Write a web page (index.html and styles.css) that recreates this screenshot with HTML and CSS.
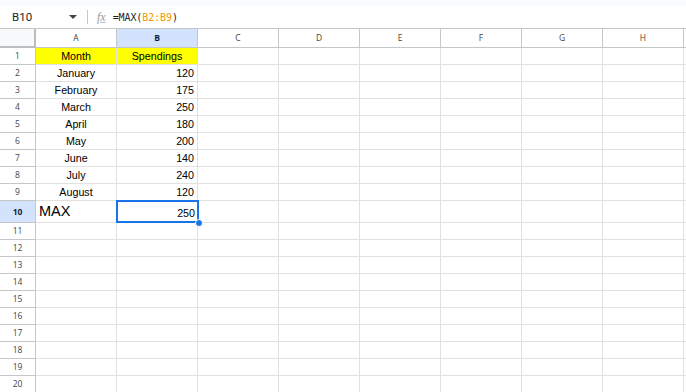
FILE: index.html
```html
<!DOCTYPE html>
<html lang="en">
<head>
    <meta charset="UTF-8">
    <title>Sheet</title>
    <link rel="stylesheet" href="styles.css">
</head>
<body>
    <div class="top-strip"></div>

    <div class="formula-bar">
        <div class="name-box">B10</div>
        <div class="name-arrow"></div>
        <div class="bar-sep"></div>
        <div class="fx-icon">fx</div>
        <div class="formula">=MAX(<span class="ref">B2:B9</span>)</div>
    </div>

    <div class="sheet">
        <div class="cell corner"></div>
        <div class="cell col-head">A</div>
        <div class="cell col-head active">B</div>
        <div class="cell col-head">C</div>
        <div class="cell col-head">D</div>
        <div class="cell col-head">E</div>
        <div class="cell col-head">F</div>
        <div class="cell col-head">G</div>
        <div class="cell col-head">H</div>
        <div class="cell col-head edge"></div>

        <div class="cell row-head">1</div>
        <div class="cell fill center">Month</div>
        <div class="cell fill center">Spendings</div>
        <div class="cell"></div><div class="cell"></div><div class="cell"></div><div class="cell"></div><div class="cell"></div><div class="cell"></div><div class="cell edge"></div>

        <div class="cell row-head">2</div>
        <div class="cell center">January</div>
        <div class="cell num">120</div>
        <div class="cell"></div><div class="cell"></div><div class="cell"></div><div class="cell"></div><div class="cell"></div><div class="cell"></div><div class="cell edge"></div>

        <div class="cell row-head">3</div>
        <div class="cell center">February</div>
        <div class="cell num">175</div>
        <div class="cell"></div><div class="cell"></div><div class="cell"></div><div class="cell"></div><div class="cell"></div><div class="cell"></div><div class="cell edge"></div>

        <div class="cell row-head">4</div>
        <div class="cell center">March</div>
        <div class="cell num">250</div>
        <div class="cell"></div><div class="cell"></div><div class="cell"></div><div class="cell"></div><div class="cell"></div><div class="cell"></div><div class="cell edge"></div>

        <div class="cell row-head">5</div>
        <div class="cell center">April</div>
        <div class="cell num">180</div>
        <div class="cell"></div><div class="cell"></div><div class="cell"></div><div class="cell"></div><div class="cell"></div><div class="cell"></div><div class="cell edge"></div>

        <div class="cell row-head">6</div>
        <div class="cell center">May</div>
        <div class="cell num">200</div>
        <div class="cell"></div><div class="cell"></div><div class="cell"></div><div class="cell"></div><div class="cell"></div><div class="cell"></div><div class="cell edge"></div>

        <div class="cell row-head">7</div>
        <div class="cell center">June</div>
        <div class="cell num">140</div>
        <div class="cell"></div><div class="cell"></div><div class="cell"></div><div class="cell"></div><div class="cell"></div><div class="cell"></div><div class="cell edge"></div>

        <div class="cell row-head">8</div>
        <div class="cell center">July</div>
        <div class="cell num">240</div>
        <div class="cell"></div><div class="cell"></div><div class="cell"></div><div class="cell"></div><div class="cell"></div><div class="cell"></div><div class="cell edge"></div>

        <div class="cell row-head">9</div>
        <div class="cell center">August</div>
        <div class="cell num">120</div>
        <div class="cell"></div><div class="cell"></div><div class="cell"></div><div class="cell"></div><div class="cell"></div><div class="cell"></div><div class="cell edge"></div>

        <div class="cell row-head active">10</div>
        <div class="cell big">MAX</div>
        <div class="cell num selected">250</div>
        <div class="cell"></div><div class="cell"></div><div class="cell"></div><div class="cell"></div><div class="cell"></div><div class="cell"></div><div class="cell edge"></div>

        <div class="cell row-head">11</div>
        <div class="cell"></div><div class="cell"></div><div class="cell"></div><div class="cell"></div><div class="cell"></div><div class="cell"></div><div class="cell"></div><div class="cell"></div><div class="cell edge"></div>
        <div class="cell row-head">12</div>
        <div class="cell"></div><div class="cell"></div><div class="cell"></div><div class="cell"></div><div class="cell"></div><div class="cell"></div><div class="cell"></div><div class="cell"></div><div class="cell edge"></div>
        <div class="cell row-head">13</div>
        <div class="cell"></div><div class="cell"></div><div class="cell"></div><div class="cell"></div><div class="cell"></div><div class="cell"></div><div class="cell"></div><div class="cell"></div><div class="cell edge"></div>
        <div class="cell row-head">14</div>
        <div class="cell"></div><div class="cell"></div><div class="cell"></div><div class="cell"></div><div class="cell"></div><div class="cell"></div><div class="cell"></div><div class="cell"></div><div class="cell edge"></div>
        <div class="cell row-head">15</div>
        <div class="cell"></div><div class="cell"></div><div class="cell"></div><div class="cell"></div><div class="cell"></div><div class="cell"></div><div class="cell"></div><div class="cell"></div><div class="cell edge"></div>
        <div class="cell row-head">16</div>
        <div class="cell"></div><div class="cell"></div><div class="cell"></div><div class="cell"></div><div class="cell"></div><div class="cell"></div><div class="cell"></div><div class="cell"></div><div class="cell edge"></div>
        <div class="cell row-head">17</div>
        <div class="cell"></div><div class="cell"></div><div class="cell"></div><div class="cell"></div><div class="cell"></div><div class="cell"></div><div class="cell"></div><div class="cell"></div><div class="cell edge"></div>
        <div class="cell row-head">18</div>
        <div class="cell"></div><div class="cell"></div><div class="cell"></div><div class="cell"></div><div class="cell"></div><div class="cell"></div><div class="cell"></div><div class="cell"></div><div class="cell edge"></div>
        <div class="cell row-head">19</div>
        <div class="cell"></div><div class="cell"></div><div class="cell"></div><div class="cell"></div><div class="cell"></div><div class="cell"></div><div class="cell"></div><div class="cell"></div><div class="cell edge"></div>
        <div class="cell row-head">20</div>
        <div class="cell"></div><div class="cell"></div><div class="cell"></div><div class="cell"></div><div class="cell"></div><div class="cell"></div><div class="cell"></div><div class="cell"></div><div class="cell edge"></div>
    </div>
</body>
</html>
```

FILE: styles.css
```css
:root {
    --grid-line: #e1e1e1;
    --head-line: #c4c7c5;
    --select: #1a73e8;
    --active-head: #d3e3fd;
}

html, body {
    margin: 0;
    padding: 0;
    overflow: hidden;
}

body {
    font-family: 'Liberation Sans', Arial, sans-serif;
    background: white;
    color: black;
    width: 686px;
    height: 392px;
}

.top-strip {
    height: 6px;
    background: #f9fbfd;
}

.formula-bar {
    display: flex;
    align-items: center;
    height: 22px;
    border-bottom: 1px solid var(--head-line);
    font-family: Roboto, 'Liberation Sans', sans-serif;
}

.name-box {
    font-size: 11.5px;
    color: #1f1f1f;
    padding-left: 12px;
    width: 56px;
}

.name-arrow {
    width: 0;
    height: 0;
    border-left: 4px solid transparent;
    border-right: 4px solid transparent;
    border-top: 4px solid #444;
    margin-left: 1px;
}

.bar-sep {
    width: 1px;
    height: 14px;
    background: #c7c7c7;
    margin-left: 10px;
}

.fx-icon {
    font-family: 'Liberation Serif', serif;
    font-style: italic;
    font-size: 12px;
    color: #9a9a9a;
    margin-left: 9px;
    text-decoration: underline;
    text-decoration-color: #c0c0c0;
}

.formula {
    font-family: 'DejaVu Sans Mono', monospace;
    font-size: 10px;
    color: #1f1f1f;
    margin-left: 7px;
    letter-spacing: -0.1px;
}

.formula .ref {
    color: #f29900;
}

.sheet {
    display: grid;
    grid-template-columns: 36px repeat(8, 81px) 2px;
    grid-template-rows: 19px repeat(9, 17px) 22px repeat(10, 17px);
}

.cell {
    box-sizing: border-box;
    border-right: 1px solid var(--grid-line);
    border-bottom: 1px solid var(--grid-line);
    font-size: 10.7px;
    line-height: 16px;
    padding: 0 3px;
    white-space: nowrap;
    overflow: hidden;
}

.cell.edge {
    border-right: none;
}

.corner {
    background: #f8f9fa;
    border-right: 2px solid #bdbdbd;
    border-bottom: 2px solid #bdbdbd;
}

.col-head {
    font-family: 'Open Sans', 'Liberation Sans', sans-serif;
    font-size: 8.5px;
    color: #444;
    text-align: center;
    line-height: 18px;
    border-right-color: var(--head-line);
    border-bottom-color: var(--head-line);
}

.row-head {
    font-family: 'Open Sans', 'Liberation Sans', sans-serif;
    font-size: 8.5px;
    color: #444;
    text-align: center;
    border-right-color: var(--head-line);
    border-bottom-color: var(--head-line);
}

.col-head.active,
.row-head.active {
    background: var(--active-head);
    color: #0b1f3f;
    font-weight: bold;
}

.row-head.active {
    line-height: 21px;
}

.fill {
    background: #ffff00;
}

.center {
    text-align: center;
}

.num {
    text-align: right;
}

.big {
    font-size: 14.5px;
    line-height: 20px;
    padding-left: 3px;
}

.selected {
    position: relative;
    overflow: visible;
    line-height: 24px;
    padding-right: 2px;
}

.selected::before {
    content: "";
    position: absolute;
    left: -1px;
    top: -1px;
    right: -2px;
    bottom: -1px;
    border: 2px solid var(--select);
}

.selected::after {
    content: "";
    position: absolute;
    right: -6px;
    bottom: -5px;
    width: 6px;
    height: 6px;
    border-radius: 50%;
    background: var(--select);
    border: 1px solid white;
    z-index: 2;
}
```
